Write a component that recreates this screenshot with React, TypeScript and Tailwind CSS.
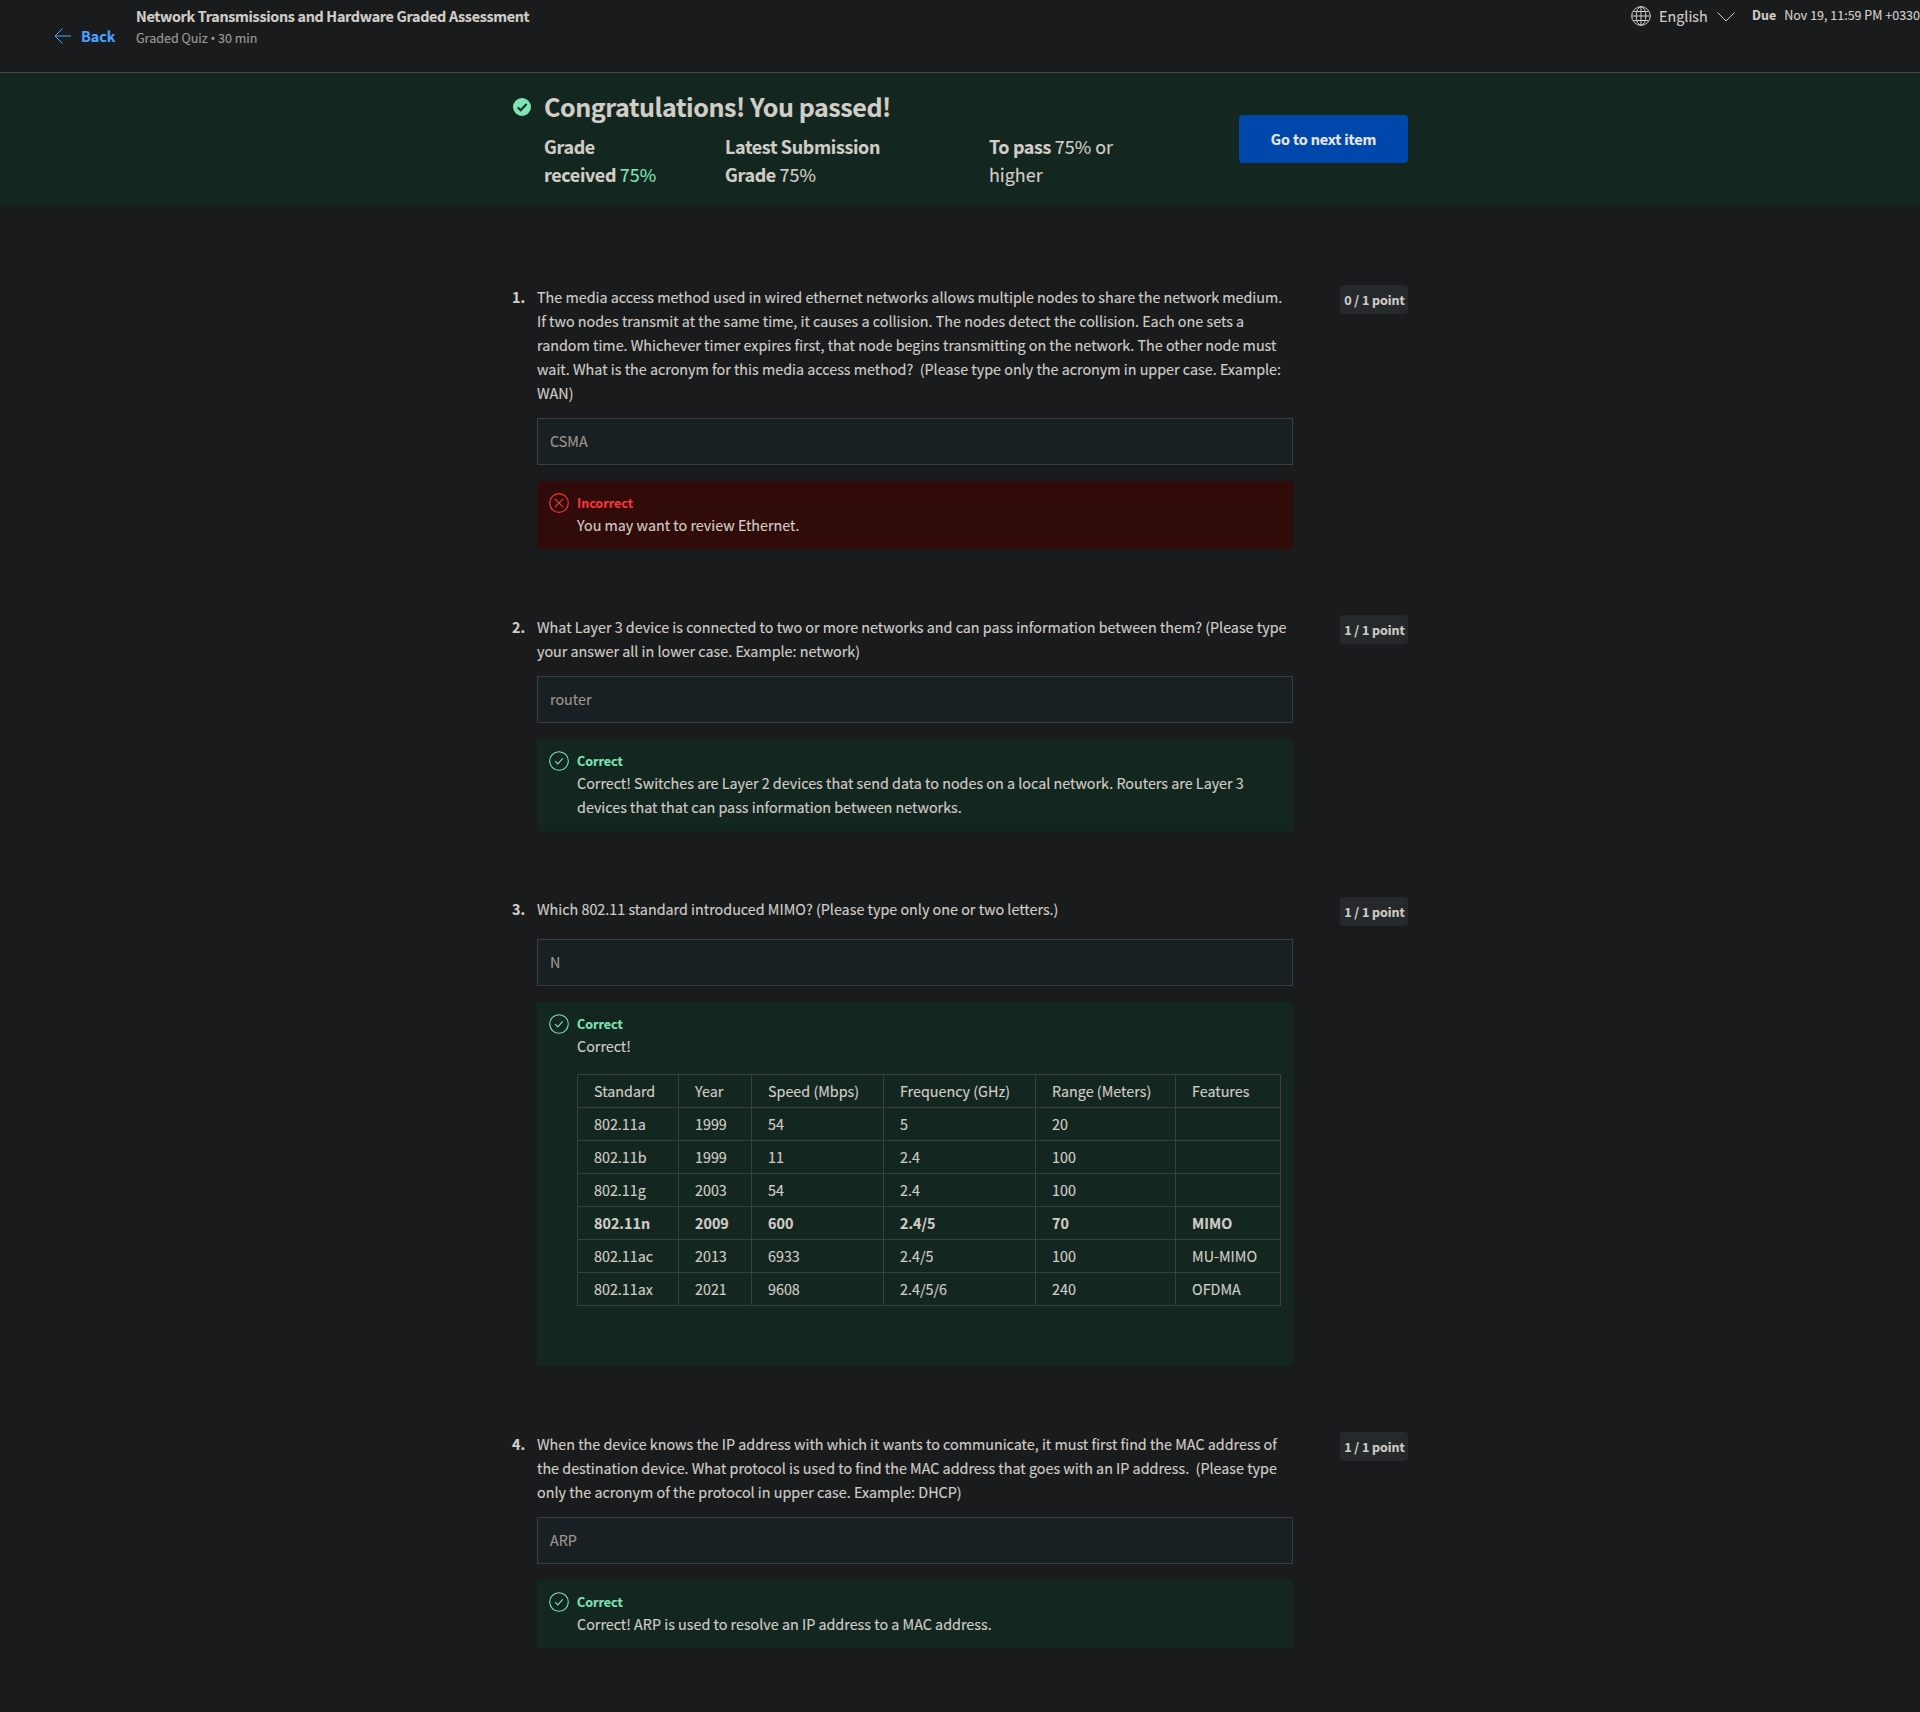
import React from 'react';

type Verdict = 'correct' | 'incorrect';

function CheckCircle() {
  return (
    <svg viewBox="0 0 20 20" className="size-5" fill="none" stroke="#7fe3b5">
      <circle cx="10" cy="10" r="9.3" strokeWidth="1.1" />
      <path d="M6.200 10.200l2.600 2.700 5-5.600" strokeWidth="1.1" />
    </svg>
  );
}

function CrossCircle() {
  return (
    <svg viewBox="0 0 20 20" className="size-5" fill="none" stroke="#f5353b">
      <circle cx="10" cy="10" r="9.3" strokeWidth="1.2" />
      <path d="M5.800 5.800l8.400 8.400M14.200 5.800l-8.400 8.400" strokeWidth="1.2" />
    </svg>
  );
}

function Lines({ lines }: { lines: string[] }) {
  return (
    <>
      {lines.map((line) => (
        <div key={line} className="h-6 leading-6 whitespace-pre">{line}</div>
      ))}
    </>
  );
}

interface QuestionProps {
  n: number;
  lines: string[];
  answer: string;
  points: string;
  verdict: Verdict;
  feedback: string[];
  gap?: string;
  children?: React.ReactNode;
}

function Question({ n, lines, answer, points, verdict, feedback, gap = 'mt-[13px]', children }: QuestionProps) {
  const ok = verdict === 'correct';
  return (
    <section className="flex items-start">
      <div className="w-[25px] leading-6 font-bold">{n}.</div>
      <div className="w-[756px]">
        <Lines lines={lines} />
        <div className={`flex h-[47px] items-center border border-[#3a3e41] bg-[#192024] pb-[2px] pl-3 text-[#9d968b] ${gap}`}>
          {answer}
        </div>
        <div className={`mt-4 flex gap-2 p-3 ${ok ? 'bg-[#142620]' : 'bg-[#310a0a]'}`}>
          {ok ? <CheckCircle /> : <CrossCircle />}
          <div>
            <div className={`h-5 text-[12.53px] leading-5 font-bold ${ok ? 'text-[#7fe3b5]' : 'text-[#f5353b]'}`}>
              {ok ? 'Correct' : 'Incorrect'}
            </div>
            <Lines lines={feedback} />
            {children}
          </div>
        </div>
      </div>
      <div className="ml-[47px] flex h-[29px] w-[68px] items-center justify-center rounded-[4px] bg-[#25292b] pt-[2px] pl-px text-[12.53px] font-bold tracking-[-0.05px] whitespace-nowrap">
        {points}
      </div>
    </section>
  );
}

const rows = [
  ['Standard', 'Year', 'Speed (Mbps)', 'Frequency (GHz)', 'Range (Meters)', 'Features'],
  ['802.11a', '1999', '54', '5', '20', ''],
  ['802.11b', '1999', '11', '2.4', '100', ''],
  ['802.11g', '2003', '54', '2.4', '100', ''],
  ['802.11n', '2009', '600', '2.4/5', '70', 'MIMO'],
  ['802.11ac', '2013', '6933', '2.4/5', '100', 'MU-MIMO'],
  ['802.11ax', '2021', '9608', '2.4/5/6', '240', 'OFDMA'],
];

function StandardsTable() {
  return (
    <table className="mt-4 mb-12 w-[704px] table-fixed border-separate border-spacing-0 border-t border-l border-[#3a3e41]">
      <colgroup>
        <col className="w-[101px]" />
        <col className="w-[73px]" />
        <col className="w-[132px]" />
        <col className="w-[152px]" />
        <col className="w-[140px]" />
        <col className="w-[105px]" />
      </colgroup>
      <tbody>
        {rows.map((row) => (
          <tr key={row[0]} className={row[0] === '802.11n' ? 'font-bold' : ''}>
            {row.map((cell, i) => (
              <td key={i} className="h-[33px] border-r border-b border-[#3a3e41] p-0 pl-4 leading-6">{cell}</td>
            ))}
          </tr>
        ))}
      </tbody>
    </table>
  );
}

export default function App() {
  return (
    <div className="min-h-[1712px] w-full bg-[#1a1b1d] font-['Noto_Sans_CJK_SC',sans-serif] text-[14.33px] text-[#d1cdc7] [-webkit-text-stroke:0.15px]">
      <header className="flex h-[73px] items-start justify-between border-b border-[#464a4b]">
        <div className="flex">
          <div className="flex h-[72px] w-[136px] items-center gap-[10px] pl-[54px] font-bold text-[#4aa3ff]">
            <svg viewBox="0 0 17 16" className="h-4 w-[17px]" fill="none" stroke="currentColor">
              <path d="M8.500 .5L1 8l7.500 7.500M1 8h16" />
            </svg>
            <span>Back</span>
          </div>
          <div className="pt-1">
            <div className="h-6 leading-6 font-bold tracking-[-0.31px]">Network Transmissions and Hardware Graded Assessment</div>
            <div className="h-5 text-[12.53px] leading-5 text-[#a09a90]">
              Graded Quiz <span className="font-['Noto_Sans']">•</span> 30 min
            </div>
          </div>
        </div>
        <div className="flex pt-1">
          <svg viewBox="0 0 20 20" className="mt-[2px] size-5" fill="none" stroke="#d1cdc7" strokeWidth="1">
            <circle cx="10" cy="10" r="9.300" />
            <ellipse cx="10" cy="10" rx="4.800" ry="9.300" />
            <path d="M10 .7v18.600M.7 10h18.600M2.500 5.500h15M2.500 14.500h15" />
          </svg>
          <div className="ml-2 leading-6">English</div>
          <svg viewBox="0 0 18 10" className="mt-2 ml-[9.300px] h-[10px] w-[18px]" fill="none" stroke="#d1cdc7">
            <path d="M.5 .5L9 9l8.500-8.500" />
          </svg>
          <div className="mt-px ml-[17px] text-[12.53px] leading-5 font-bold">Due</div>
          <div className="mt-px ml-2 text-[12.53px] leading-5">Nov 19, 11:59 PM +0330</div>
        </div>
      </header>

      <div className="h-[132px] bg-[#142620]">
        <div className="mx-auto flex w-[896px] items-start">
          <svg viewBox="0 0 18 18" className="mt-[25px] ml-px size-[18px] shrink-0">
            <circle cx="9" cy="9" r="9" fill="#7fe3b5" />
            <path d="M4.700 9.400l2.900 2.900 6-6.300" fill="none" stroke="#142620" strokeWidth="2" />
          </svg>
          <div className="ml-[13px] pt-[15px]">
            <div className="h-9 text-[25.07px] leading-9 font-bold tracking-[-0.45px]">Congratulations! You passed!</div>
            <div className="mt-2 flex text-[17.900px] leading-7">
              <div className="w-[181px]">
                <div className="font-bold tracking-[-0.34px]">Grade</div>
                <div><b className="font-bold tracking-[-0.34px]">received </b><span className="text-[#7fe3b5]">75%</span></div>
              </div>
              <div className="w-[264px]">
                <div className="font-bold tracking-[-0.34px]">Latest Submission</div>
                <div><b className="font-bold tracking-[-0.34px]">Grade </b>75%</div>
              </div>
              <div className="w-[250px]">
                <div><b className="font-bold tracking-[-0.34px]">To pass </b>75% or</div>
                <div>higher</div>
              </div>
            </div>
          </div>
          <button className="mt-[42px] flex h-12 w-[169px] shrink-0 items-center justify-center rounded-[4px] bg-[#0047ab] font-bold tracking-[-0.1px] text-[#e8e6e3]">
            Go to next item
          </button>
        </div>
      </div>

      <main className="mx-auto flex w-[896px] flex-col gap-[66px] pt-20">
        <Question
          n={1}
          lines={[
            'The media access method used in wired ethernet networks allows multiple nodes to share the network medium.',
            'If two nodes transmit at the same time, it causes a collision. The nodes detect the collision. Each one sets a',
            'random time. Whichever timer expires first, that node begins transmitting on the network. The other node must',
            'wait. What is the acronym for this media access method?  (Please type only the acronym in upper case. Example:',
            'WAN)',
          ]}
          answer="CSMA"
          points="0 / 1 point"
          verdict="incorrect"
          feedback={['You may want to review Ethernet.']}
        />
        <Question
          n={2}
          lines={[
            'What Layer 3 device is connected to two or more networks and can pass information between them? (Please type',
            'your answer all in lower case. Example: network)',
          ]}
          answer="router"
          points="1 / 1 point"
          verdict="correct"
          feedback={[
            'Correct! Switches are Layer 2 devices that send data to nodes on a local network. Routers are Layer 3',
            'devices that that can pass information between networks.',
          ]}
        />
        <Question
          n={3}
          lines={['Which 802.11 standard introduced MIMO? (Please type only one or two letters.)']}
          answer="N"
          points="1 / 1 point"
          verdict="correct"
          feedback={['Correct!']}
          gap="mt-[18px]"
        >
          <StandardsTable />
        </Question>
        <Question
          n={4}
          lines={[
            'When the device knows the IP address with which it wants to communicate, it must first find the MAC address of',
            'the destination device. What protocol is used to find the MAC address that goes with an IP address.  (Please type',
            'only the acronym of the protocol in upper case. Example: DHCP)',
          ]}
          answer="ARP"
          points="1 / 1 point"
          verdict="correct"
          feedback={['Correct! ARP is used to resolve an IP address to a MAC address.']}
        />
      </main>
    </div>
  );
}
